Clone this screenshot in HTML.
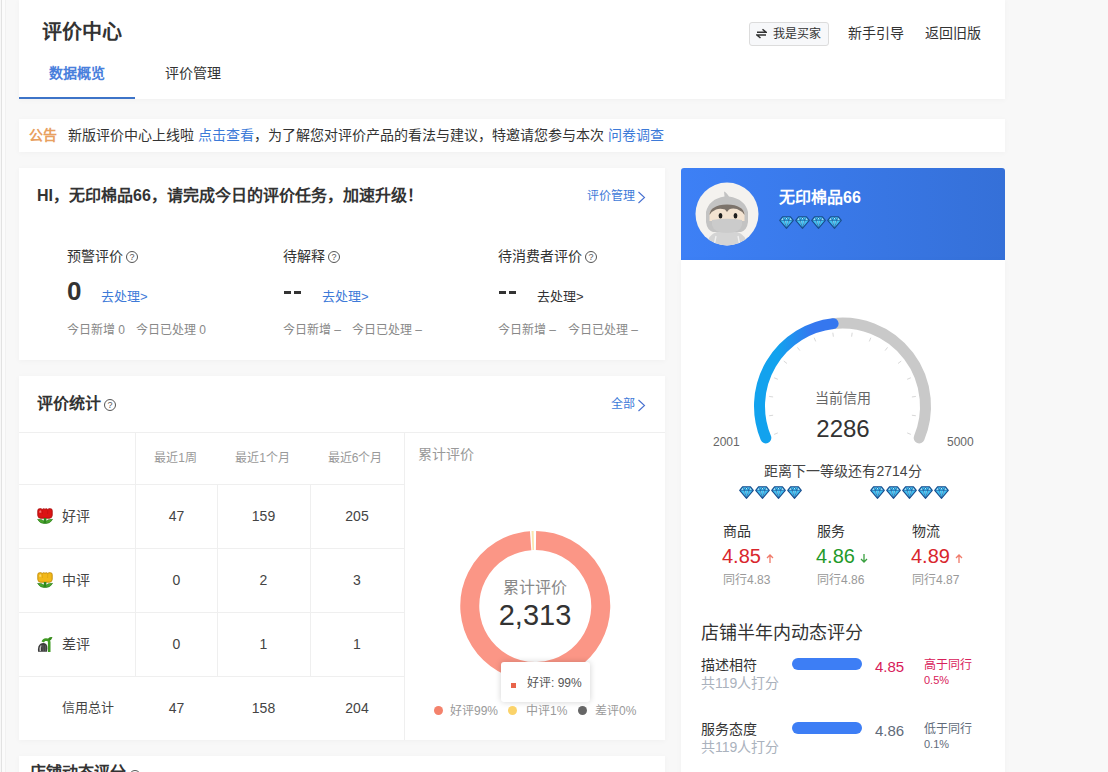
<!DOCTYPE html>
<html lang="zh-CN"><head><meta charset="utf-8">
<style>
*{margin:0;padding:0;box-sizing:border-box}
html,body{width:1108px;height:772px;overflow:hidden;background:#f8f8f8;font-family:"Liberation Sans",sans-serif;color:#333}
.a{position:absolute;white-space:nowrap;line-height:1}
.card{position:absolute;background:#fff;box-shadow:0 1px 6px rgba(0,0,0,0.035)}
.lk{color:#3d7ad8}
.q{display:inline-block;width:12px;height:12px;border:1px solid #555;border-radius:50%;font-size:9px;line-height:10px;text-align:center;color:#555;vertical-align:middle}
</style></head><body>
<div class="a" style="left:1px;top:0;width:1px;height:772px;background:#e2e2e2"></div><div class="a" style="left:2px;top:0;width:3px;height:772px;background:#fbfbfb"></div><div class="a" style="left:5px;top:0;width:1px;height:772px;background:#f1f1f1"></div>

<!-- header -->
<div class="card" style="left:19px;top:0;width:986px;height:99px"></div>
<div class="a" style="left:42px;top:22px;font-size:20px;font-weight:bold;color:#333">评价中心</div>
<div class="a" style="left:49px;top:66px;font-size:14px;font-weight:bold;color:#4a80dc">数据概览</div>
<div class="a" style="left:165px;top:66px;font-size:14px;color:#333">评价管理</div>
<div class="a" style="left:19px;top:97px;width:116px;height:2px;background:#3d74c8"></div>

<div class="a" style="left:749px;top:22px;width:80px;height:24px;border:1px solid #dcdcdc;border-radius:3px;background:#f7f8fa"></div>
<svg class="a" style="left:756px;top:28px" width="11" height="11" viewBox="0 0 11 11"><path d="M1 4.2 L10 4.2 L6.5 1.2 M10 7 L1 7 L4.5 10" fill="none" stroke="#333" stroke-width="1.5"/></svg>
<div class="a" style="left:773px;top:28px;font-size:12px;color:#333">我是买家</div>
<div class="a" style="left:848px;top:26px;font-size:14px;color:#333">新手引导</div>
<div class="a" style="left:925px;top:26px;font-size:14px;color:#333">返回旧版</div>

<!-- notice -->
<div class="card" style="left:19px;top:119px;width:986px;height:33px"></div>
<div class="a" style="left:29px;top:128px;font-size:14px;color:#e8a060;font-weight:bold">公告</div>
<div class="a" style="left:68px;top:128px;font-size:14px;color:#333">新版评价中心上线啦 <span class="lk">点击查看</span>，为了解您对评价产品的看法与建议，特邀请您参与本次 <span class="lk">问卷调查</span></div>

<!-- card1 -->
<div class="card" style="left:19px;top:168px;width:646px;height:192px"></div>
<div class="a" style="left:37px;top:188px;font-size:16px;font-weight:bold;color:#333">HI，无印棉品66，请完成今日的评价任务，加速升级！</div>
<div class="a lk" style="left:587px;top:190px;font-size:12px">评价管理</div>
<svg class="a" style="left:637px;top:191px" width="9" height="13" viewBox="0 0 9 13"><path d="M1.5 1 L7.5 6.5 L1.5 12" fill="none" stroke="#4870d0" stroke-width="1.1"/></svg>

<div class="a" style="left:67px;top:249px;font-size:14px;color:#333">预警评价</div><span class="a q" style="left:126px;top:251px">?</span>
<div class="a" style="left:67px;top:278px;font-size:26px;font-weight:bold;color:#333">0</div>
<div class="a lk" style="left:101px;top:290px;font-size:13px">去处理&gt;</div>
<div class="a" style="left:67px;top:324px;font-size:12px;color:#888">今日新增 0</div>
<div class="a" style="left:136px;top:324px;font-size:12px;color:#888">今日已处理 0</div>

<div class="a" style="left:283px;top:249px;font-size:14px;color:#333">待解释</div><span class="a q" style="left:328px;top:251px">?</span>
<div class="a" style="left:284px;top:291px;width:7px;height:3px;background:#333"></div><div class="a" style="left:294px;top:291px;width:7px;height:3px;background:#333"></div>
<div class="a lk" style="left:322px;top:290px;font-size:13px">去处理&gt;</div>
<div class="a" style="left:283px;top:324px;font-size:12px;color:#888">今日新增 –</div>
<div class="a" style="left:352px;top:324px;font-size:12px;color:#888">今日已处理 –</div>

<div class="a" style="left:498px;top:249px;font-size:14px;color:#333">待消费者评价</div><span class="a q" style="left:585px;top:251px">?</span>
<div class="a" style="left:499px;top:291px;width:7px;height:3px;background:#333"></div><div class="a" style="left:509px;top:291px;width:7px;height:3px;background:#333"></div>
<div class="a" style="left:537px;top:290px;font-size:13px;color:#333">去处理&gt;</div>
<div class="a" style="left:498px;top:324px;font-size:12px;color:#888">今日新增 –</div>
<div class="a" style="left:568px;top:324px;font-size:12px;color:#888">今日已处理 –</div>

<!-- card2 -->
<div class="card" style="left:19px;top:376px;width:646px;height:364px"></div>
<div class="a" style="left:37px;top:396px;font-size:16px;font-weight:bold;color:#333">评价统计</div><span class="a q" style="left:104px;top:399px">?</span>
<div class="a lk" style="left:611px;top:398px;font-size:12px">全部</div>
<svg class="a" style="left:637px;top:399px" width="9" height="13" viewBox="0 0 9 13"><path d="M1.5 1 L7.5 6.5 L1.5 12" fill="none" stroke="#4870d0" stroke-width="1.1"/></svg>
<div class="a" style="left:19px;top:432px;width:646px;height:1px;background:#efefef"></div>
<div class="a" style="left:19px;top:484px;width:386px;height:1px;background:#efefef"></div>
<div class="a" style="left:19px;top:548px;width:386px;height:1px;background:#efefef"></div>
<div class="a" style="left:19px;top:612px;width:386px;height:1px;background:#efefef"></div>
<div class="a" style="left:19px;top:676px;width:386px;height:1px;background:#efefef"></div>
<div class="a" style="left:135px;top:432px;width:1px;height:244px;background:#efefef"></div>
<div class="a" style="left:217px;top:484px;width:1px;height:192px;background:#efefef"></div>
<div class="a" style="left:310px;top:484px;width:1px;height:192px;background:#efefef"></div>
<div class="a" style="left:404px;top:432px;width:1px;height:308px;background:#efefef"></div>
<div class="a" style="left:135px;top:452px;width:81px;text-align:center;font-size:12px;color:#999">最近1周</div>
<div class="a" style="left:216px;top:452px;width:93px;text-align:center;font-size:12px;color:#999">最近1个月</div>
<div class="a" style="left:308px;top:452px;width:94px;text-align:center;font-size:12px;color:#999">最近6个月</div>
<div class="a" style="left:37px;top:508px"><svg width="17" height="17" viewBox="0 0 17 17"><path d="M0.8 2.6 Q0.8 0.6 2.6 0.8 Q4 0.3 5.2 1.4 Q6.5 0.2 8 1.2 Q9.4 0.2 10.8 1.4 Q12 0.3 13.4 0.8 Q15.2 0.6 15.2 2.6 L15.2 7.5 Q15 10 12.5 10.2 L3.5 10.2 Q1 10 0.8 7.5 Z" fill="#dc1414" stroke="#a80c0c" stroke-width="0.9"/><path d="M2.2 3 L4 2.2 L4.5 4.5 L2.5 5Z" fill="#ff9a9a" opacity="0.7"/><path d="M5.2 1.6 L5.5 6 M10.8 1.6 L10.5 6" stroke="#a80c0c" stroke-width="0.5" opacity="0.6"/><rect x="6.8" y="10" width="2.6" height="5.8" fill="#2f8a1e"/><path d="M0.6 11.4 Q4 10.6 7 13 L7 15.4 Q3 15.6 0.6 11.4Z M15.6 11.4 Q12 10.6 9.2 13 L9.2 15.4 Q13 15.6 15.6 11.4Z" fill="#48a82c" stroke="#2f7a1c" stroke-width="0.6"/></svg></div><div class="a" style="left:62px;top:509px;font-size:14px;color:#444">好评</div><div class="a" style="left:136px;top:509px;width:81px;text-align:center;font-size:14px;color:#444">47</div><div class="a" style="left:217px;top:509px;width:93px;text-align:center;font-size:14px;color:#444">159</div><div class="a" style="left:310px;top:509px;width:94px;text-align:center;font-size:14px;color:#444">205</div>
<div class="a" style="left:37px;top:572px"><svg width="17" height="17" viewBox="0 0 17 17"><path d="M0.8 2.6 Q0.8 0.6 2.6 0.8 Q4 0.3 5.2 1.4 Q6.5 0.2 8 1.2 Q9.4 0.2 10.8 1.4 Q12 0.3 13.4 0.8 Q15.2 0.6 15.2 2.6 L15.2 7.5 Q15 10 12.5 10.2 L3.5 10.2 Q1 10 0.8 7.5 Z" fill="#f2b818" stroke="#c08a08" stroke-width="0.9"/><path d="M2.2 3 L4 2.2 L4.5 4.5 L2.5 5Z" fill="#ffe890" opacity="0.7"/><path d="M5.2 1.6 L5.5 6 M10.8 1.6 L10.5 6" stroke="#c08a08" stroke-width="0.5" opacity="0.6"/><rect x="6.8" y="10" width="2.6" height="5.8" fill="#2f8a1e"/><path d="M0.6 11.4 Q4 10.6 7 13 L7 15.4 Q3 15.6 0.6 11.4Z M15.6 11.4 Q12 10.6 9.2 13 L9.2 15.4 Q13 15.6 15.6 11.4Z" fill="#48a82c" stroke="#2f7a1c" stroke-width="0.6"/></svg></div><div class="a" style="left:62px;top:573px;font-size:14px;color:#444">中评</div><div class="a" style="left:136px;top:573px;width:81px;text-align:center;font-size:14px;color:#444">0</div><div class="a" style="left:217px;top:573px;width:93px;text-align:center;font-size:14px;color:#444">2</div><div class="a" style="left:310px;top:573px;width:94px;text-align:center;font-size:14px;color:#444">3</div>
<div class="a" style="left:37px;top:636px"><svg width="17" height="17" viewBox="0 0 17 17"><path d="M12.2 16 L12.2 6 Q12 3.5 9 3.5 Q6.5 3.8 5.8 6" fill="none" stroke="#3f9a22" stroke-width="2.6"/><path d="M11 2.5 Q13 0.8 15.5 1.2 Q14.5 4 12.5 4.6Z" fill="#358a1a"/><path d="M1 15.8 Q0.5 9.5 3.5 7.8 Q6.5 6.2 9.2 8 Q10.6 9.5 10.4 12.5 L10 15.8 Z" fill="#3c3c3c"/><path d="M2.6 15 Q2.2 11 3.6 9.2 L4.6 9.6 Q3.6 12 4 15Z" fill="#c4c4c4"/><path d="M6 9 Q5.8 12 6.4 15.5 M8.3 9.4 Q8.2 12 8.4 15.5" stroke="#777" stroke-width="0.6" fill="none"/></svg></div><div class="a" style="left:62px;top:637px;font-size:14px;color:#444">差评</div><div class="a" style="left:136px;top:637px;width:81px;text-align:center;font-size:14px;color:#444">0</div><div class="a" style="left:217px;top:637px;width:93px;text-align:center;font-size:14px;color:#444">1</div><div class="a" style="left:310px;top:637px;width:94px;text-align:center;font-size:14px;color:#444">1</div>
<div class="a" style="left:62px;top:701px;font-size:13px;color:#444">信用总计</div><div class="a" style="left:136px;top:701px;width:81px;text-align:center;font-size:14px;color:#444">47</div><div class="a" style="left:217px;top:701px;width:93px;text-align:center;font-size:14px;color:#444">158</div><div class="a" style="left:310px;top:701px;width:94px;text-align:center;font-size:14px;color:#444">204</div>
<div class="a" style="left:418px;top:447px;font-size:14px;color:#999">累计评价</div>

<svg class="a" style="left:404px;top:432px" width="261" height="308" viewBox="0 0 261 308">
<path d="M132.00 108.50 A65.5 65.5 0 1 1 126.63 108.66" fill="none" stroke="#fb9686" stroke-width="19"/>
<path d="M128.00 108.58 A65.5 65.5 0 0 1 129.83 108.51" fill="none" stroke="#fbe6ad" stroke-width="19"/>
</svg>
<div class="a" style="left:475px;top:580px;width:120px;text-align:center;font-size:16px;color:#888">累计评价</div>
<div class="a" style="left:455px;top:601px;width:160px;text-align:center;font-size:29px;color:#333">2,313</div>
<div class="a" style="left:501px;top:662px;width:89px;height:40px;background:#fff;border-radius:3px;box-shadow:0 0 6px rgba(0,0,0,0.18)"></div>
<div class="a" style="left:511px;top:683px;width:5px;height:5px;background:#e8644a"></div>
<div class="a" style="left:527px;top:677px;font-size:12px;color:#555">好评: 99%</div>
<div class="a" style="left:434px;top:706px;width:9px;height:9px;border-radius:50%;background:#f4826c"></div>
<div class="a" style="left:450px;top:705px;font-size:12px;color:#999">好评99%</div>
<div class="a" style="left:508px;top:706px;width:9px;height:9px;border-radius:50%;background:#fbd36a"></div>
<div class="a" style="left:526px;top:705px;font-size:12px;color:#999">中评1%</div>
<div class="a" style="left:578px;top:706px;width:9px;height:9px;border-radius:50%;background:#666"></div>
<div class="a" style="left:595px;top:705px;font-size:12px;color:#999">差评0%</div>

<!-- card3 -->
<div class="card" style="left:19px;top:756px;width:646px;height:30px"></div>
<div class="a" style="left:30px;top:765px;font-size:16px;font-weight:bold;color:#333">店铺动态评分</div><span class="a q" style="left:129px;top:770px">?</span>

<!-- right -->
<svg width="0" height="0" style="position:absolute"><defs>
<g id="dm"><path d="M3.5 0.8 L11.5 0.8 L14.3 4.3 L7.5 12.3 L0.7 4.3 Z" fill="#3ec0f2"/>
<path d="M2 4.2 L4 1.4 L5 4.2Z M6.2 1.4 L8.8 1.4 L7.5 3.6Z M10 4.2 L11 1.4 L13 4.2Z M4.8 5 L7.5 11.5 L6.3 5Z M8.7 5 L7.5 11.5 L10.2 5Z" fill="#b5f0ff"/>
<path d="M3.5 0.8 L11.5 0.8 L14.3 4.3 L7.5 12.3 L0.7 4.3 Z" fill="none" stroke="#1a4c8c" stroke-width="1.1" stroke-linejoin="round"/>
<path d="M1 4.3 L14 4.3 M3.6 1 L5.2 4.3 L7.5 11.8 L9.8 4.3 L11.4 1 M7.5 1 L5.2 4.3 M7.5 1 L9.8 4.3" fill="none" stroke="#1a5a9c" stroke-width="0.7"/></g>
<linearGradient id="gb" gradientUnits="userSpaceOnUse" x1="778" y1="0" x2="812" y2="0"><stop offset="0" stop-color="#12a2ee"/><stop offset="1" stop-color="#3577ef"/></linearGradient>
<clipPath id="avc"><circle cx="32" cy="32" r="31.5"/></clipPath>
</defs></svg>
<div class="a" style="left:681px;top:168px;width:324px;height:92px;border-radius:3px 3px 0 0;background:linear-gradient(90deg,#3d80f6,#3570d8)"></div>
<svg class="a" style="left:695px;top:182px" width="64" height="64" viewBox="0 0 64 64">
<circle cx="32" cy="32" r="31.5" fill="#f4f2ef"/>
<g clip-path="url(#avc)">
<path d="M12 64 Q13 52 22 50 L42 50 Q51 52 52 64Z" fill="#d4d4d4"/>
<path d="M19 64 L21 54 M45 64 L43 54" stroke="#f0f0f0" stroke-width="1.4"/>
<path d="M29 9.5 Q31 10 34 14.5 Q50 17 53 30 L53 40 Q52 48 46 50 L18 50 Q12 48 11 40 L11 30 Q14 17 29.5 14.5 Z" fill="#c3c3c3"/>
<path d="M14.5 32 Q15 24 32 23 Q49 24 49.5 32 L49.5 39 L14.5 39 Z" fill="#f3e3d1"/>
<path d="M14.5 33 Q15 23 32 22.5 Q49 23 49.5 33 Q47 29 42 27 Q37 26 34 27.5 L32 30 L30 27.5 Q25 26 21 27.5 Q17 29 14.5 33Z" fill="#7c736b"/>
<ellipse cx="25.5" cy="33.8" rx="1.9" ry="2.7" fill="#1e1e1e"/>
<ellipse cx="40.5" cy="33.8" rx="1.9" ry="2.7" fill="#1e1e1e"/>
<path d="M17 38 Q32 35.5 47 38 L47 43 Q45 51 32 51 Q19 51 17 43Z" fill="#cbcbcb"/>
</g></svg>
<div class="a" style="left:779px;top:190px;font-size:16px;font-weight:bold;color:#fff">无印棉品66</div>
<svg class="a" style="left:779px;top:216px" width="15" height="13" viewBox="0 0 15 13"><use href="#dm"/></svg><svg class="a" style="left:795px;top:216px" width="15" height="13" viewBox="0 0 15 13"><use href="#dm"/></svg><svg class="a" style="left:811px;top:216px" width="15" height="13" viewBox="0 0 15 13"><use href="#dm"/></svg><svg class="a" style="left:827px;top:216px" width="15" height="13" viewBox="0 0 15 13"><use href="#dm"/></svg>
<div class="card" style="left:681px;top:260px;width:324px;height:520px"></div>
<svg class="a" style="left:0;top:0" width="1108" height="772" viewBox="0 0 1108 772">
<path d="M919.18 437.86 A83 83 0 0 0 833.10 323.63" fill="none" stroke="#c9c9c9" stroke-width="11" stroke-linecap="round"/>
<path d="M765.82 437.86 A83 83 0 0 1 833.10 323.63" fill="none" stroke="url(#gb)" stroke-width="11" stroke-linecap="round"/>
<g stroke="#d8d8d8" stroke-width="1"><line x1="777.83" y1="432.89" x2="774.13" y2="434.42"/><line x1="773.10" y1="415.24" x2="769.13" y2="415.76"/><line x1="773.10" y1="396.96" x2="769.13" y2="396.44"/><line x1="777.83" y1="379.31" x2="774.13" y2="377.78"/><line x1="786.97" y1="363.49" x2="783.79" y2="361.05"/><line x1="799.89" y1="350.57" x2="797.45" y2="347.39"/><line x1="815.71" y1="341.43" x2="814.18" y2="337.73"/><line x1="833.36" y1="336.70" x2="832.84" y2="332.73"/><line x1="851.64" y1="336.70" x2="852.16" y2="332.73"/><line x1="869.29" y1="341.43" x2="870.82" y2="337.73"/><line x1="885.11" y1="350.57" x2="887.55" y2="347.39"/><line x1="898.03" y1="363.49" x2="901.21" y2="361.05"/><line x1="907.17" y1="379.31" x2="910.87" y2="377.78"/><line x1="911.90" y1="396.96" x2="915.87" y2="396.44"/><line x1="911.90" y1="415.24" x2="915.87" y2="415.76"/><line x1="907.17" y1="432.89" x2="910.87" y2="434.42"/></g>
</svg>
<div class="a" style="left:783px;top:391px;width:120px;text-align:center;font-size:14px;color:#666">当前信用</div>
<div class="a" style="left:783px;top:417px;width:120px;text-align:center;font-size:24px;color:#333">2286</div>
<div class="a" style="left:713px;top:436px;font-size:12px;color:#666">2001</div>
<div class="a" style="left:947px;top:436px;font-size:12px;color:#666">5000</div>
<div class="a" style="left:743px;top:464px;width:200px;text-align:center;font-size:14px;color:#444">距离下一等级还有2714分</div>
<svg class="a" style="left:739px;top:486px" width="15" height="13" viewBox="0 0 15 13"><use href="#dm"/></svg><svg class="a" style="left:755px;top:486px" width="15" height="13" viewBox="0 0 15 13"><use href="#dm"/></svg><svg class="a" style="left:771px;top:486px" width="15" height="13" viewBox="0 0 15 13"><use href="#dm"/></svg><svg class="a" style="left:787px;top:486px" width="15" height="13" viewBox="0 0 15 13"><use href="#dm"/></svg>
<svg class="a" style="left:870px;top:486px" width="15" height="13" viewBox="0 0 15 13"><use href="#dm"/></svg><svg class="a" style="left:886px;top:486px" width="15" height="13" viewBox="0 0 15 13"><use href="#dm"/></svg><svg class="a" style="left:902px;top:486px" width="15" height="13" viewBox="0 0 15 13"><use href="#dm"/></svg><svg class="a" style="left:918px;top:486px" width="15" height="13" viewBox="0 0 15 13"><use href="#dm"/></svg><svg class="a" style="left:934px;top:486px" width="15" height="13" viewBox="0 0 15 13"><use href="#dm"/></svg>
<div class="a" style="left:723px;top:524px;font-size:14px;color:#333">商品</div><div class="a" style="left:722px;top:546px;font-size:20px;color:#d9262c">4.85</div><svg class="a" style="left:766px;top:553px" width="8" height="11" viewBox="0 0 8 11"><path d="M4 10 L4 2 M1 5 L4 2 L7 5" fill="none" stroke="#f07a6a" stroke-width="1.3"/></svg><div class="a" style="left:723px;top:574px;font-size:12px;color:#999">同行4.83</div>
<div class="a" style="left:817px;top:524px;font-size:14px;color:#333">服务</div><div class="a" style="left:816px;top:546px;font-size:20px;color:#1f9a2a">4.86</div><svg class="a" style="left:860px;top:553px" width="8" height="11" viewBox="0 0 8 11"><path d="M4 1 L4 9 M1 6 L4 9 L7 6" fill="none" stroke="#3aa040" stroke-width="1.3"/></svg><div class="a" style="left:817px;top:574px;font-size:12px;color:#999">同行4.86</div>
<div class="a" style="left:912px;top:524px;font-size:14px;color:#333">物流</div><div class="a" style="left:911px;top:546px;font-size:20px;color:#d9262c">4.89</div><svg class="a" style="left:955px;top:553px" width="8" height="11" viewBox="0 0 8 11"><path d="M4 10 L4 2 M1 5 L4 2 L7 5" fill="none" stroke="#f07a6a" stroke-width="1.3"/></svg><div class="a" style="left:912px;top:574px;font-size:12px;color:#999">同行4.87</div>
<div class="a" style="left:701px;top:624px;font-size:18px;color:#333">店铺半年内动态评分</div>
<div class="a" style="left:701px;top:658px;font-size:14px;color:#333">描述相符</div>
<div class="a" style="left:701px;top:676px;font-size:14px;color:#aab2bd">共119人打分</div>
<div class="a" style="left:792px;top:658px;width:70px;height:12px;border-radius:6px;background:#3d7ef5"></div>
<div class="a" style="left:875px;top:659px;font-size:15px;color:#d8205a">4.85</div>
<div class="a" style="left:924px;top:659px;font-size:12px;color:#d8205a">高于同行</div>
<div class="a" style="left:924px;top:675px;font-size:11px;color:#d8205a">0.5%</div>
<div class="a" style="left:701px;top:722px;font-size:14px;color:#333">服务态度</div>
<div class="a" style="left:701px;top:740px;font-size:14px;color:#aab2bd">共119人打分</div>
<div class="a" style="left:792px;top:722px;width:70px;height:12px;border-radius:6px;background:#3d7ef5"></div>
<div class="a" style="left:875px;top:723px;font-size:15px;color:#5f6b7a">4.86</div>
<div class="a" style="left:924px;top:723px;font-size:12px;color:#5f6b7a">低于同行</div>
<div class="a" style="left:924px;top:739px;font-size:11px;color:#5f6b7a">0.1%</div>
</body></html>
